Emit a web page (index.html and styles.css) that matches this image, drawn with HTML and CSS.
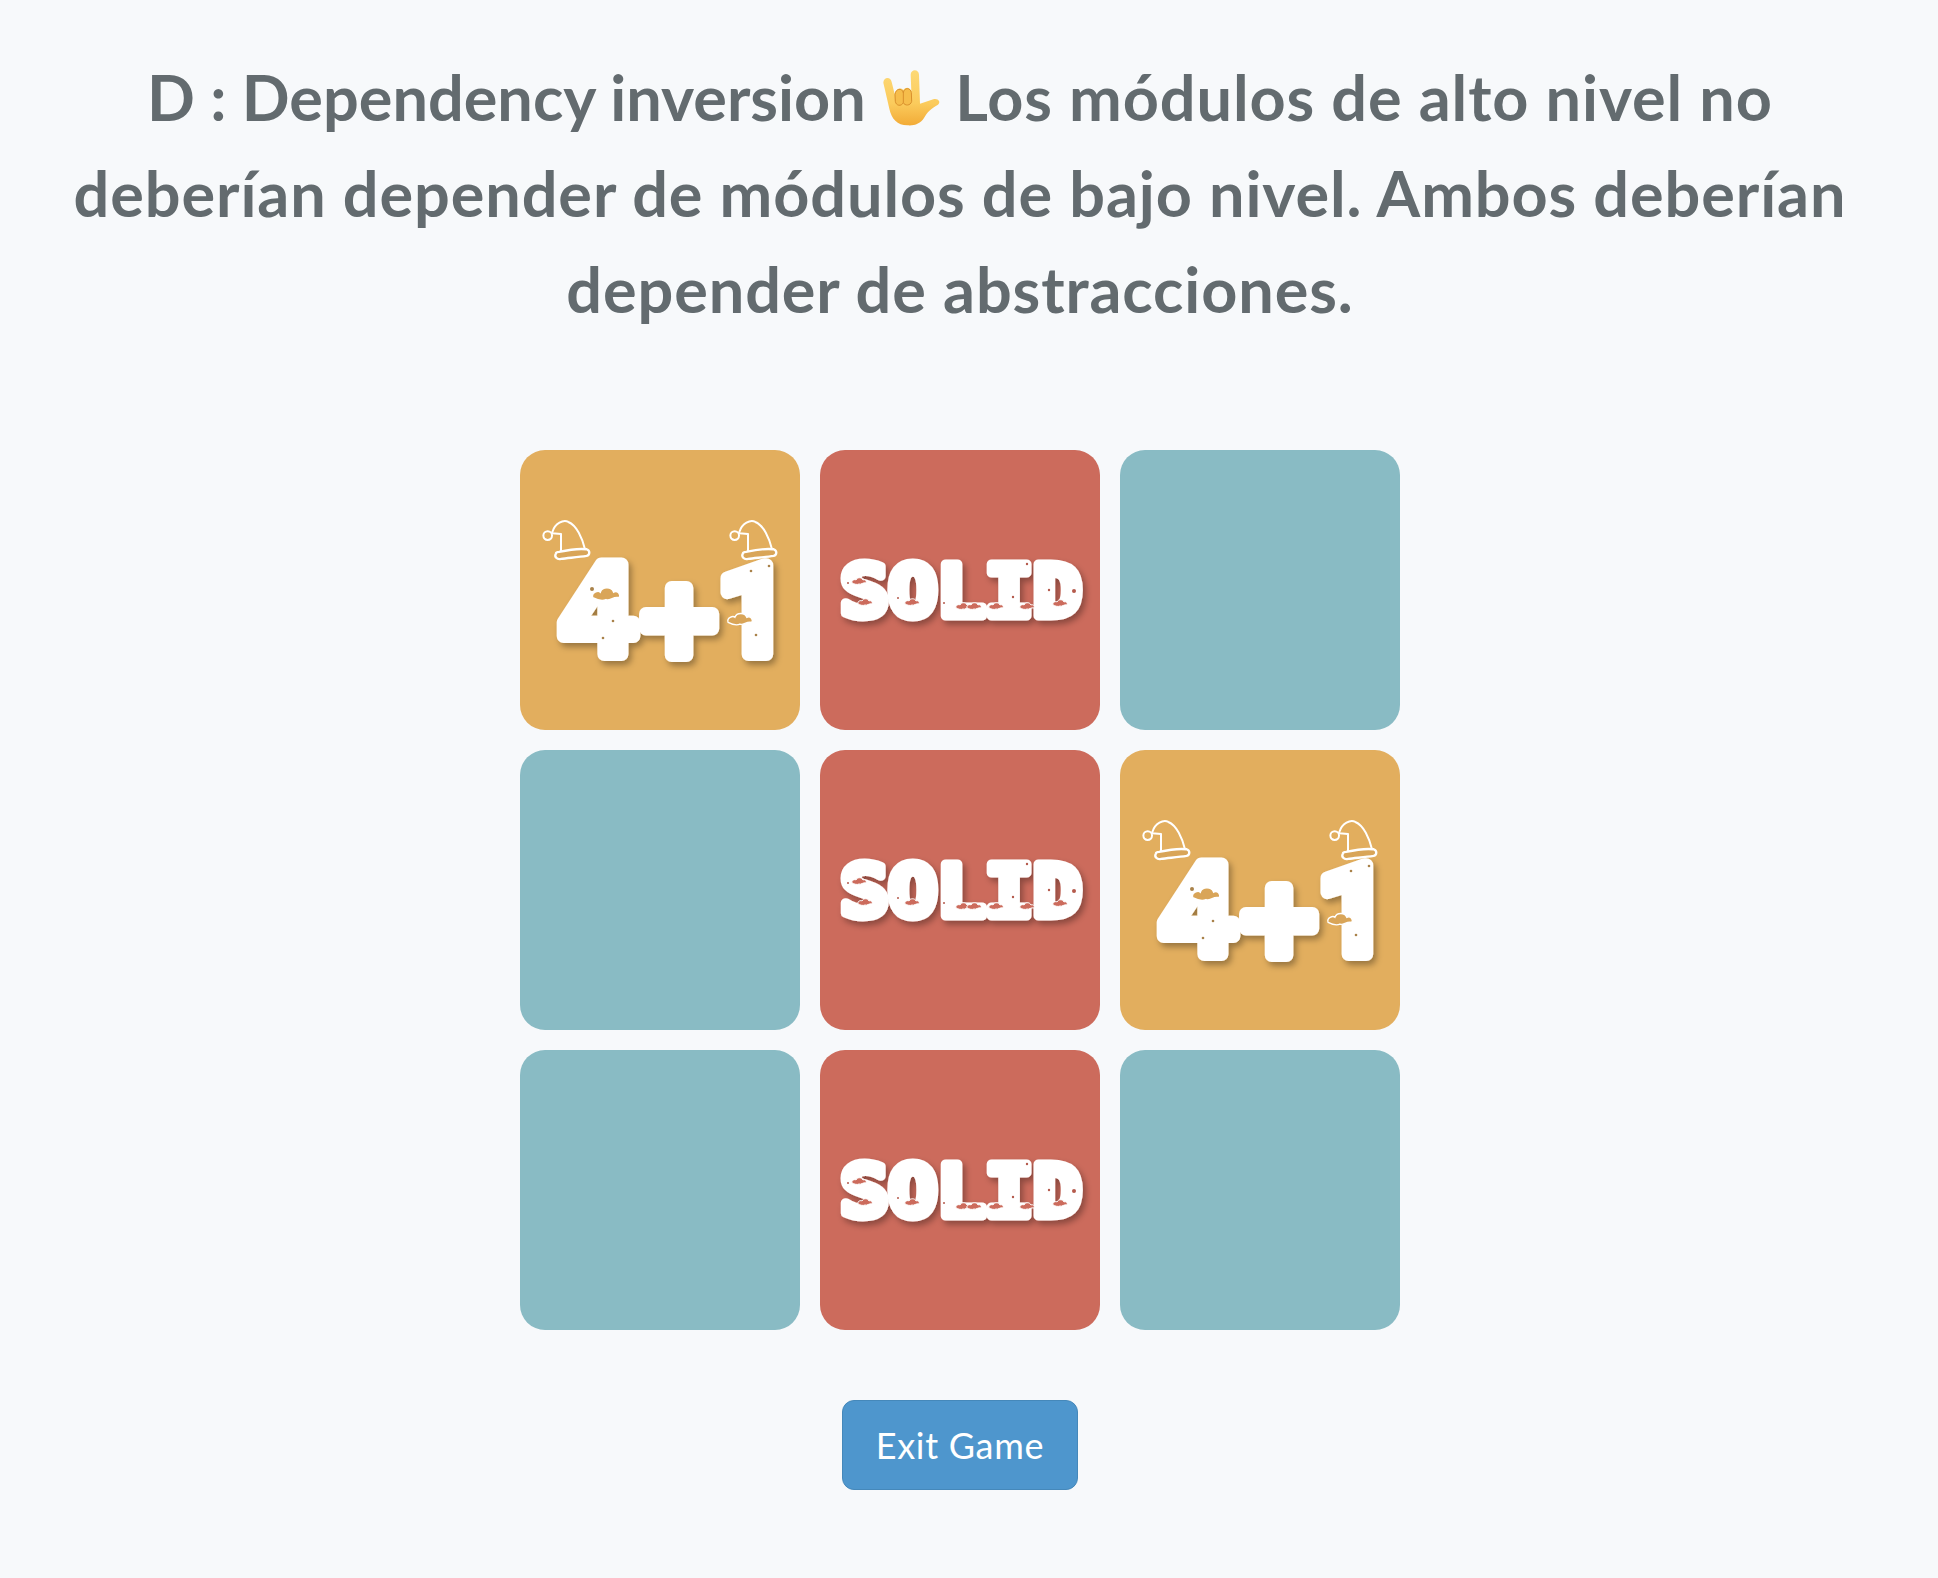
FILE: index.html
```html
<!DOCTYPE html>
<html lang="es">
<head>
<meta charset="utf-8">
<title>Dependency inversion</title>
<link rel="stylesheet" href="styles.css">
</head>
<body>
<svg class="defs" width="0" height="0" aria-hidden="true">
  <defs>
    <linearGradient id="skin" x1="0" y1="0" x2="0" y2="1">
      <stop offset="0" stop-color="#fdd976"/>
      <stop offset="0.6" stop-color="#fbcb5c"/>
      <stop offset="1" stop-color="#f2ab37"/>
    </linearGradient>
    <filter id="logo-shadow" x="-20%" y="-20%" width="140%" height="140%">
      <feDropShadow dx="3" dy="4" stdDeviation="3" flood-color="#000" flood-opacity="0.32"/>
    </filter>
    <path id="snow" d="M-7 2 C-8 -1 -4 -2 -3 -1 C-2 -4 3 -4 4 -1 C6 -2 8 0 7 2 C4 1 2 4 0 3 C-2 4 -5 3 -7 2Z"/>
    <g id="hat">
      <path class="hat-line" d="M52 66 C60 40 85 28 100 36 C125 46 142 85 150 118 M52 70 L78 72 L78 128"/>
      <circle class="hat-line" cx="38" cy="77" r="13"/>
      <path class="hat-line hat-brim" d="M62 132 C58 140 65 150 78 147 C100 144 130 142 155 138 C165 135 166 122 155 118 C130 115 90 122 72 126 C66 126 63 128 62 132Z"/>
    </g>
    <g id="solid-marks">
      <use href="#snow" class="snow-red" x="39" y="131"/>
      <use href="#snow" class="snow-red" x="45" y="152"/>
      <use href="#snow" class="snow-red" x="92" y="152"/>
      <use href="#snow" class="snow-red" x="143" y="156"/>
      <use href="#snow" class="snow-red" x="154" y="156"/>
      <use href="#snow" class="snow-red" x="176" y="156"/>
      <use href="#snow" class="snow-red" x="207" y="156"/>
      <use href="#snow" class="snow-red" x="240" y="153"/>
      <g class="dot-red">
        <circle cx="28" cy="133" r="1"/><circle cx="78" cy="148" r="1"/><circle cx="124" cy="153" r="1"/>
        <circle cx="207" cy="114" r="1.2"/><circle cx="193" cy="147" r="1.2"/><circle cx="229" cy="140" r="1.2"/>
        <circle cx="254" cy="141" r="2"/>
      </g>
    </g>
    <g id="four-marks">
      <use href="#snow" class="snow-yellow" transform="translate(86 144) scale(1.9)"/>
      <use href="#snow" class="snow-yellow" transform="translate(220 169) scale(1.7)"/>
      <g class="dot-yellow">
        <circle cx="72" cy="139" r="2"/><circle cx="93" cy="171" r="1.3"/>
        <circle cx="83" cy="188" r="1.3"/><circle cx="231" cy="121" r="1.3"/><circle cx="249" cy="116" r="1.3"/>
        <circle cx="236" cy="185" r="1.3"/>
      </g>
      <svg x="20" y="68.3" width="51.7" height="43.3" viewBox="15 25 155 130"><use href="#hat"/></svg>
      <svg x="207" y="68.3" width="51.7" height="43.3" viewBox="15 25 155 130"><use href="#hat"/></svg>
    </g>
  </defs>
</svg>
<main class="page">
  <h1 class="title"><span class="lead">D : Dependency inversion</span> <svg class="emoji" viewBox="0 0 210 210" aria-hidden="true"><path class="emoji-skin" d="M28 62 C28 45 50 42 53 60 L62 96 C66 78 82 76 88 84 C96 74 108 76 112 88 L110 38 C110 20 135 20 135 38 L138 125 L178 112 C192 108 202 120 192 128 C170 140 160 150 150 168 C140 185 120 192 100 190 C70 190 52 170 46 140Z"/><path class="emoji-fold" d="M63 98 C64 80 84 76 88 92 C90 76 110 76 112 92 L113 118 C110 132 92 132 88 122 C82 134 66 132 64 118Z M88 90 L88 122"/></svg> Los módulos de alto nivel no deberían depender de módulos de bajo nivel. Ambos deberían depender de abstracciones.</h1>
  <section class="board">
    <div class="card card-yellow"><svg class="logo" viewBox="0 0 280 280"><g class="logo-shadow"><text class="four-text" x="78" y="204">4</text><text class="four-text plus-text" x="159" y="215">+</text><text class="four-text one-text" x="233" y="204">1</text></g><use href="#four-marks"/></svg></div>
    <div class="card card-red"><svg class="logo" viewBox="0 0 280 280"><g class="logo-shadow"><text class="solid-text" x="141" y="166" textLength="241" lengthAdjust="spacingAndGlyphs">SOLID</text></g><use href="#solid-marks"/></svg></div>
    <div class="card card-blue"></div>
    <div class="card card-blue"></div>
    <div class="card card-red"><svg class="logo" viewBox="0 0 280 280"><g class="logo-shadow"><text class="solid-text" x="141" y="166" textLength="241" lengthAdjust="spacingAndGlyphs">SOLID</text></g><use href="#solid-marks"/></svg></div>
    <div class="card card-yellow"><svg class="logo" viewBox="0 0 280 280"><g class="logo-shadow"><text class="four-text" x="78" y="204">4</text><text class="four-text plus-text" x="159" y="215">+</text><text class="four-text one-text" x="233" y="204">1</text></g><use href="#four-marks"/></svg></div>
    <div class="card card-blue"></div>
    <div class="card card-red"><svg class="logo" viewBox="0 0 280 280"><g class="logo-shadow"><text class="solid-text" x="141" y="166" textLength="241" lengthAdjust="spacingAndGlyphs">SOLID</text></g><use href="#solid-marks"/></svg></div>
    <div class="card card-blue"></div>
  </section>
  <button class="exit" type="button">Exit Game</button>
</main>
</body>
</html>
```
FILE: styles.css
```css
* { box-sizing: border-box; }
html, body { margin: 0; background: #f7f9fb; }
.defs { position: absolute; }
.page {
  width: 1920px;
  min-height: 1578px;
  padding-top: 49px;
  display: flex;
  flex-direction: column;
  align-items: center;
}
.title {
  margin: 0 0 113px;
  width: 1800px;
  text-align: center;
  font-family: Lato, "Liberation Sans", sans-serif;
  font-size: 63px;
  font-weight: 700;
  letter-spacing: 0.9px;
  line-height: 96px;
  color: #636b6f;
}
.lead { letter-spacing: 0; }
.emoji { width: 70px; height: 70px; vertical-align: -11px; margin: 0 -5px 0 -8px; }
.emoji-skin { fill: url(#skin); }
.emoji-fold { fill: #f6bd4b; stroke: #d9902c; stroke-width: 3; }
.board {
  display: grid;
  grid-template-columns: repeat(3, 280px);
  grid-auto-rows: 280px;
  gap: 20px;
}
.card { border-radius: 25px; overflow: hidden; }
.card-yellow { background: #e2ae5e; }
.card-red { background: #cc6b5c; }
.card-blue { background: #89bbc4; }
.logo { display: block; width: 280px; height: 280px; }
.logo-shadow { filter: url(#logo-shadow); }
.solid-text {
  font-family: "DejaVu Sans Mono", monospace;
  font-weight: 700;
  font-size: 72px;
  text-anchor: middle;
  fill: #fff;
  stroke: #fff;
  stroke-width: 9;
  stroke-linejoin: round;
}
.four-text {
  font-family: "Liberation Sans", sans-serif;
  font-weight: 700;
  font-size: 130px;
  text-anchor: middle;
  fill: #fff;
  stroke: #fff;
  stroke-width: 14;
  stroke-linejoin: round;
}
.plus-text { font-size: 132px; }
.one-text { font-family: Roboto, "Liberation Sans", sans-serif; font-size: 125px; }
.snow-red { fill: #cc6b5c; stroke: #fff; stroke-width: 1; }
.snow-yellow { fill: #d9a558; stroke: #fff; stroke-width: 0.8; }
.dot-red { fill: #b55a4c; }
.dot-yellow { fill: #a9824a; }
.hat-line { fill: none; stroke: #fff; stroke-width: 6; stroke-linejoin: round; stroke-linecap: round; }
.hat-brim { fill: #d9a558; stroke-width: 7; }
.exit {
  margin-top: 70px;
  width: 236px;
  height: 90px;
  border: 1px solid #4588ba;
  border-radius: 12px;
  background: #4e96cd;
  color: #fff;
  font-family: Lato, "Liberation Sans", sans-serif;
  font-size: 36px;
  letter-spacing: 0.7px;
}
```
